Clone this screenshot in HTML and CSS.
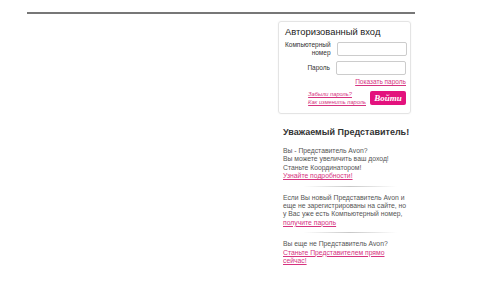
FILE: index.html
```html
<!DOCTYPE html>
<html lang="ru">
<head>
    <meta charset="UTF-8">
    <title>Avon</title>
    <link rel="stylesheet" href="styles.css">
</head>
<body>
    <div class="page">
        <div class="top-line"></div>
        <div class="content">
            <div class="main"></div>
            <div class="sidebar">
                <!-- login box -->
                <form class="login">
                    <h3>Авторизованный вход</h3>
                    <div class="row">
                        <label>Компьютерный<br>номер</label>
                        <input type="text">
                    </div>
                    <div class="row">
                        <label>Пароль</label>
                        <input type="password">
                    </div>
                    <a href="#" class="show-pass">Показать пароль</a>
                    <div class="login-bottom">
                        <div class="help">
                            <a href="#">Забыли пароль?</a>
                            <a href="#">Как изменить пароль</a>
                        </div>
                        <button type="button">Войти</button>
                    </div>
                </form>

                <div class="info">
                    <h4>Уважаемый Представитель!</h4>
                    <p>Вы - Представитель Avon?<br>Вы можете увеличить ваш доход!<br>Станьте Координатором!<br><a href="#">Узнайте подробности!</a></p>
                    <div class="sep"></div>
                    <p>Если Вы новый Представитель Avon и еще не зарегистрированы на сайте, но у Вас уже есть Компьютерный номер, <a href="#">получите пароль</a></p>
                    <div class="sep"></div>
                    <p>Вы еще не Представитель Avon?<br><a href="#">Станьте Представителем прямо сейчас!</a></p>
                </div>
            </div>
        </div>
    </div>
</body>
</html>
```

FILE: styles.css
```css
* {
    box-sizing: border-box;
}

body {
    margin: 0;
    background: #fff;
    font-family: "Liberation Sans", Arial, sans-serif;
    color: #555;
}

.page {
    width: 388px;
    margin-left: 27px;
    padding-top: 12px;
}

.top-line {
    height: 2px;
    background: #777;
}

.content {
    display: flex;
    padding-top: 7px;
}

.main {
    flex: 1;
}

.sidebar {
    width: 133px;
    margin-right: 4px;
}

.login {
    border: 1px solid #e4e4e4;
    border-radius: 3px;
    padding: 4px 4px 7px 6px;
    box-shadow: 0 0 2px rgba(0, 0, 0, 0.06);
}

.login h3 {
    margin: 0 0 3px 0;
    font-size: 9.4px;
    line-height: 12px;
    font-weight: normal;
    color: #222;
}

.login .row {
    display: flex;
    align-items: center;
    margin-bottom: 4px;
}

.login label {
    width: 48px;
    text-align: right;
    font-size: 6.5px;
    line-height: 8px;
    color: #333;
}

.login input {
    margin-left: 6px;
    width: 70px;
    height: 14px;
    border: 1px solid #ccc;
    border-radius: 2px;
    padding: 0 2px;
}

.show-pass {
    display: block;
    text-align: right;
    font-size: 6.5px;
    color: #d6337f;
    margin-top: -1px;
}

.login-bottom {
    display: flex;
    justify-content: flex-end;
    align-items: center;
    margin-top: 5px;
}

.help a {
    display: block;
    font-size: 5.7px;
    font-style: italic;
    line-height: 8px;
    color: #d6337f;
}

.login button {
    margin-left: 4px;
    width: 36px;
    height: 14px;
    padding: 0;
    border: none;
    border-radius: 2px;
    background: #e3127d;
    color: #fff;
    font-family: "Liberation Serif", serif;
    font-style: italic;
    font-weight: bold;
    font-size: 9px;
}

.info {
    padding: 0 4px 0 5px;
}

.info h4 {
    margin: 12px 0 9px 0;
    font-size: 9px;
    line-height: 12px;
    white-space: nowrap;
    color: #333;
}

.info p {
    margin: 0;
    font-size: 6.8px;
    line-height: 8.4px;
}

.info a {
    color: #d6337f;
}

.sep {
    height: 1px;
    margin: 5px 10px 7px 20px;
    background: linear-gradient(to right, rgba(200, 200, 200, 0), #c8c8c8 50%, rgba(200, 200, 200, 0));
}
```
